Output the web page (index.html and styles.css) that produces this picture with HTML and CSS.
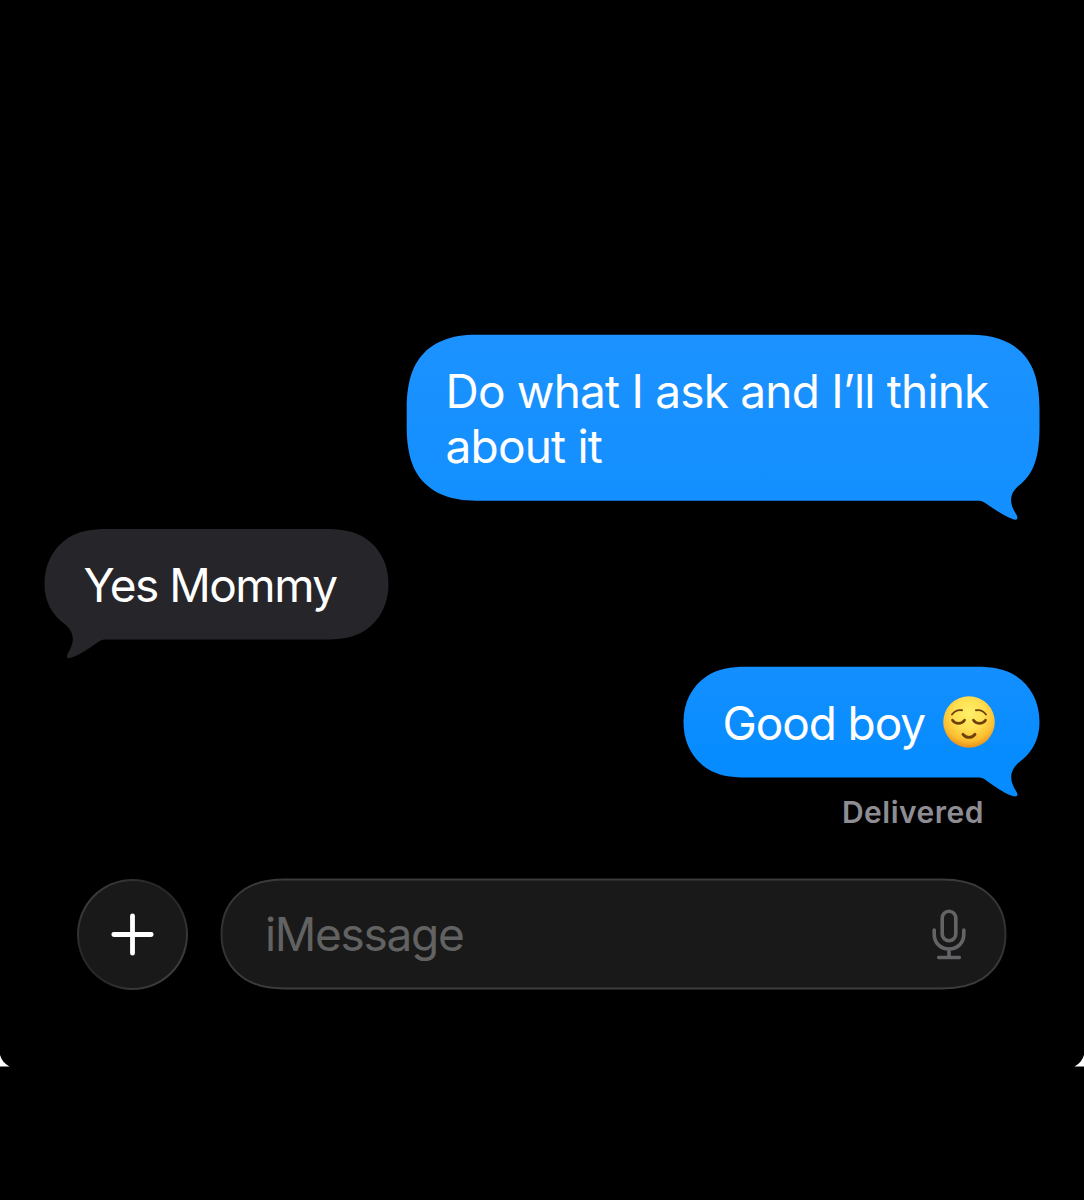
FILE: index.html
```html
<!DOCTYPE html>
<html lang="en">
<head>
    <meta charset="UTF-8">
    <meta name="viewport" content="width=device-width, initial-scale=1.0">
    <title>Messages</title>
    <link rel="stylesheet" href="styles.css">
</head>
<body>

<div class="screen">
    <main class="conversation">
        <div class="message sent message-first">
            <svg class="bubble-shape" width="634" height="187" viewBox="0 0 634 187" aria-hidden="true">
                <defs>
                    <linearGradient id="blueTop" x1="0" y1="0" x2="0" y2="1">
                        <stop offset="0" stop-color="#1b92ff"/>
                        <stop offset="1" stop-color="#138fff"/>
                    </linearGradient>
                </defs>
                <path fill="url(#blueTop)" d="M70 .8H564.200C590.200 .8 605.800 8.600 615.700 18.500C625.600 28.400 633.500 44 633.500 75V94C633.500 128 625 142 613 151.500C603 159.500 603 169 610 180C613 184.500 611 187 606.500 185C598 182 588 175 580 169.500C577 167.200 575 166.700 571 166.700H70C44 166.700 28.400 158.900 18.500 149C8.600 139.100 .7 123.500 .7 92.500V75C.7 44 8.600 28.400 18.500 18.500C28.400 8.600 44 .8 70 .8Z"/>
            </svg>
            <p class="message-text">Do what I ask and I’ll think<br>about it</p>
        </div>

        <div class="message received">
            <svg class="bubble-shape" width="345" height="131" viewBox="0 0 345 131" aria-hidden="true">
                <path fill="#26252a" d="M64 1H281C298 1 310 3 321 10C336 20 344.500 36 344.500 56C344.500 76 336 92.500 321 102.500C310 109.500 298 111.500 281 111.500H63C59 111.500 57 112 54 114C46 119.500 36 127 27 129.800C23 131 22 129 24 125C31 114 31 104 20 95.500C9 87 .5 75 .5 56C.5 36 9 20 24 10C35 3 47 1 64 1Z"/>
            </svg>
            <p class="message-text">Yes Mommy</p>
        </div>

        <div class="message sent message-last">
            <svg class="bubble-shape" width="357" height="131" viewBox="0 0 357 131" aria-hidden="true">
                <defs>
                    <linearGradient id="blueBottom" x1="0" y1="0" x2="0" y2="1">
                        <stop offset="0" stop-color="#148fff"/>
                        <stop offset=".7" stop-color="#068cff"/>
                        <stop offset="1" stop-color="#068cff"/>
                    </linearGradient>
                </defs>
                <path fill="url(#blueBottom)" d="M64 .8H293C310 .8 322 3 333 10C348 20 356.500 36 356.500 56C356.500 75 348 87 337 95.500C326 104 326 114 333 125C336 129.500 334 131.500 329.500 130C321 127 311 120 303 114.200C300 112 298 111.500 294 111.500H64C47 111.500 35 109.500 24 102.500C9 92.500 .5 76 .5 56C.5 36 9 20 24 10C35 3 47 .8 64 .8Z"/>
            </svg>
            <p class="message-text">Good boy</p>
            <svg class="emoji" width="54" height="54" viewBox="0 0 54 54" role="img" aria-label="relieved face">
                <defs>
                    <radialGradient id="face" cx=".5" cy=".34" r=".67">
                        <stop offset="0" stop-color="#fff06a"/>
                        <stop offset=".45" stop-color="#ffdf50"/>
                        <stop offset=".78" stop-color="#fbbd30"/>
                        <stop offset="1" stop-color="#e98b16"/>
                    </radialGradient>
                </defs>
                <circle cx="27" cy="27" r="25.800" fill="url(#face)"/>
                <g fill="none" stroke="#70400b" stroke-linecap="round">
                    <path stroke-width="1.900" d="M10 19.500C12.500 16 16 14.600 20 15.300M34 15.300C38 14.600 41.500 16 44 19.500"/>
                    <path stroke-width="2.700" d="M10.500 25.200C13.500 29.400 19.500 29.400 22.500 25.200M31.500 25.200C34.500 29.400 40.500 29.400 43.500 25.200"/>
                    <path stroke-width="2.900" d="M21 39.300C24 43.400 30 43.400 33 39.300"/>
                </g>
            </svg>
        </div>
        <div class="status">Delivered</div>
    </main>

    <footer class="composer">
        <button class="add-button" aria-label="Add">
            <svg width="44" height="44" viewBox="0 0 44 44" fill="none" stroke="#fff" stroke-width="4.800" stroke-linecap="round">
                <path d="M21.500 2.800V40.200M2.800 21.500H40.200"/>
            </svg>
        </button>
        <div class="field">
            <svg class="field-shape" width="788" height="112" viewBox="0 0 788 112" aria-hidden="true">
                <defs>
                    <linearGradient id="fieldEdge" x1="0" y1="0" x2="0" y2="1">
                        <stop offset="0" stop-color="#3b3b3b"/>
                        <stop offset=".5" stop-color="#303030"/>
                        <stop offset="1" stop-color="#3d3d3d"/>
                    </linearGradient>
                </defs>
                <path fill="#191919" stroke="url(#fieldEdge)" stroke-width="2" d="M65 1.500H722C739 1.500 751 4 762 11C777 21 785.500 36.500 785.500 56C785.500 75.500 777 91 762 101C751 108 739 110.500 722 110.500H65C48 110.500 36 108 25 101C10 91 1.500 75.500 1.500 56C1.500 36.500 10 21 25 11C36 4 48 1.500 65 1.500Z"/>
            </svg>
            <span class="placeholder">iMessage</span>
            <svg class="mic" width="34" height="52" viewBox="0 0 34 52" fill="none" stroke="#646467" stroke-width="3.600" stroke-linecap="round">
                <rect x="10.200" y="2.200" width="13.600" height="29.600" rx="6.800"/>
                <path d="M2.200 21V25C2.200 34 8.500 40 17 40S31.800 34 31.800 25V21M17 40V48.500M6.700 48.500H27.300"/>
            </svg>
        </div>
    </footer>

    <svg class="corner corner-left" width="12" height="12" viewBox="0 0 12 12" aria-hidden="true">
        <path fill="#fff" d="M0 0C1.500 5 4.500 9 9.500 11.500H0Z"/>
    </svg>
    <svg class="corner corner-right" width="12" height="12" viewBox="0 0 12 12" aria-hidden="true">
        <path fill="#fff" d="M12 0C10.500 5 7.500 9 2.500 11.500H12Z"/>
    </svg>
</div>

</body>
</html>
```
FILE: styles.css
```css
* {
    box-sizing: border-box;
}

body {
    margin: 0;
    min-height: 1200px;
    background-color: #000;
    color: #fff;
    font-family: Inter, "Liberation Sans", sans-serif;
}

.screen {
    position: relative;
    width: 1084px;
    height: 1067px;
    padding-top: 334px;
}

/* Conversation */
.conversation {
    display: flex;
    flex-direction: column;
    height: 544px;
    padding: 0 44px;
}

.message {
    position: relative;
    display: flex;
    align-items: center;
    height: 112px;
    padding: 2px 40px 0 39.5px;
    margin-bottom: 26px;
}

.sent {
    align-self: flex-end;
}

.received {
    align-self: flex-start;
    width: 345px;
}

.message-first {
    width: 634px;
    height: 168px;
}

.message-last {
    width: 357px;
    margin-bottom: 0;
}

/* the tail hangs below the box */
.bubble-shape {
    position: absolute;
    left: 0;
    top: 0;
}

.message-text {
    position: relative;
    margin: 0;
    font-size: 46px;
    line-height: 55px;
    letter-spacing: -0.8px;
    white-space: nowrap;
}

.message-last .message-text {
    letter-spacing: -1.1px;
}

.received .message-text {
    letter-spacing: -1.5px;
}

.emoji {
    position: relative;
    margin-left: auto;
    margin-right: 4px;
    margin-bottom: 2px;
}

.status {
    align-self: flex-end;
    margin: 16px 56px 0 0;
    font-size: 30px;
    line-height: 37px;
    font-weight: 600;
    letter-spacing: 0.5px;
    color: #8e8d93;
}

/* Composer */
.composer {
    display: flex;
    gap: 32px;
    padding-left: 77px;
}

.add-button {
    display: flex;
    align-items: center;
    justify-content: center;
    width: 111px;
    height: 111px;
    margin-top: 1px;
    padding: 0;
    border: 2px solid transparent;
    border-radius: 50%;
    background: linear-gradient(#191919, #191919) padding-box,
                linear-gradient(135deg, #484848, #282828 35%, #282828 55%, #484848) border-box;
}

.field {
    position: relative;
    display: flex;
    align-items: center;
    justify-content: space-between;
    width: 788px;
    height: 112px;
    padding: 1px 42px 0 45px;
}

.field-shape {
    position: absolute;
    left: 0;
    top: 0;
}

.placeholder {
    position: relative;
    font-size: 46px;
    line-height: 55px;
    letter-spacing: -1.3px;
    color: #626262;
}

.mic {
    position: relative;
}

/* Rounded bottom corners of the screen */
.corner {
    position: absolute;
    bottom: 0;
}

.corner-left {
    left: 0;
}

.corner-right {
    right: 0;
}
```
